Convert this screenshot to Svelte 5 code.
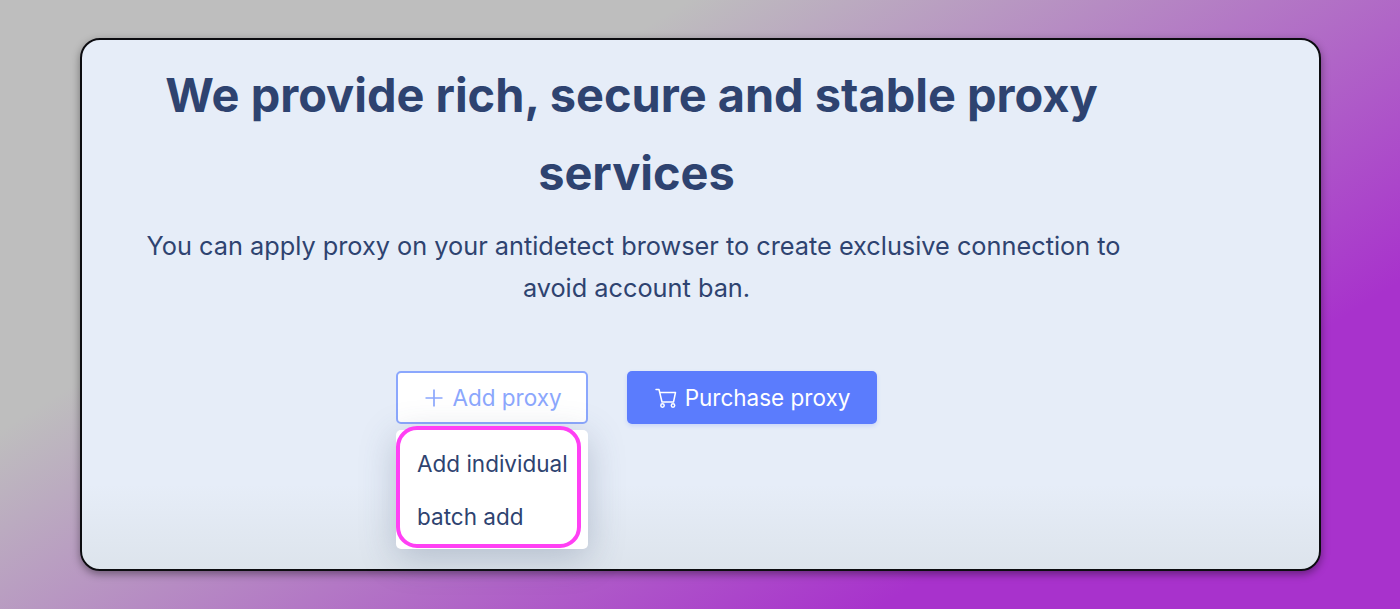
<script>
	const menuItems = ['Add individual', 'batch add'];
</script>

<div class="page">
	<div class="card">
		<div class="intro">
			<h1>We provide rich, secure and stable proxy services</h1>
			<p>You can apply proxy on your antidetect browser to create exclusive connection to avoid account ban.</p>
			<div class="actions">
				<div class="add-wrap">
					<button class="btn btn-outline">
						<svg width="20" height="20" viewBox="0 0 20 20" fill="none" stroke="currentColor" stroke-width="1.7">
							<path d="M10 1.500v17M1.500 10h17" />
						</svg>
						Add proxy
					</button>
					<div class="menu">
						{#each menuItems as item}
							<div class="menu-item">{item}</div>
						{/each}
						<div class="highlight"></div>
					</div>
				</div>
				<button class="btn btn-primary">
					<svg width="24" height="24" viewBox="0 0 24 24" fill="none" stroke="currentColor" stroke-width="1.5" stroke-linejoin="round" stroke-linecap="round">
						<path d="M2 3.500h3l3 12.500h11.500l2-9.500H6" />
						<circle cx="8.500" cy="19.500" r="1.700" />
						<circle cx="19" cy="19.500" r="1.700" />
					</svg>
					Purchase proxy
				</button>
			</div>
		</div>
	</div>
</div>

<style>
	:global(body) {
		margin: 0;
	}
	.page {
		box-sizing: border-box;
		height: 609px;
		padding: 38px 79px 38px 80px;
		background: linear-gradient(148deg, #bebebe 29%, #a832cc 78%);
		font-family: Inter, "Liberation Sans", sans-serif;
		overflow: hidden;
	}
	.card {
		box-sizing: border-box;
		height: 100%;
		border: 2px solid #0c0c10;
		border-radius: 20px;
		background: linear-gradient(180deg, #e6edf8 84%, #dde4ec 100%);
		box-shadow: 0 3px 8px rgba(0, 0, 0, 0.4);
		padding: 0 183px 0 55px;
	}
	.intro {
		text-align: center;
		color: #2e4370;
	}
	h1 {
		margin: 16px 0 0;
		font-size: 46.9px;
		line-height: 78px;
		font-weight: 700;
		text-indent: -10px;
	}
	p {
		margin: 13px 0 0;
		font-size: 25.3px;
		line-height: 42px;
		text-indent: -6px;
	}
	.actions {
		display: flex;
		justify-content: center;
		gap: 39px;
		margin-top: 62px;
	}
	.add-wrap {
		position: relative;
	}
	.btn {
		display: flex;
		align-items: center;
		justify-content: center;
		box-sizing: border-box;
		height: 53px;
		border-radius: 5px;
		font-family: inherit;
		font-size: 22.5px;
	}
	.btn-outline {
		gap: 8px;
		width: 192px;
		padding: 0 0 0 2px;
		border: 2px solid #8ba7fd;
		background: #ffffff;
		color: #8ba7fd;
	}
	.btn-primary {
		gap: 7px;
		width: 250px;
		border: none;
		background: #5b7cfd;
		color: #ffffff;
		box-shadow: 0 2px 4px rgba(91, 124, 253, 0.2);
	}
	.menu {
		position: absolute;
		top: 59px;
		left: 0;
		width: 192px;
		height: 119px;
		box-sizing: border-box;
		padding-top: 7px;
		background: #ffffff;
		border-radius: 5px;
		box-shadow: 0 8px 36px rgba(60, 80, 110, 0.28);
		text-align: left;
	}
	.menu-item {
		padding-left: 21px;
		height: 53px;
		line-height: 53px;
		font-size: 22.5px;
		white-space: nowrap;
	}
	.highlight {
		position: absolute;
		top: -4px;
		left: 0;
		width: 185px;
		height: 122px;
		box-sizing: border-box;
		border: 4px solid #ff40f4;
		border-radius: 21px;
	}
</style>
